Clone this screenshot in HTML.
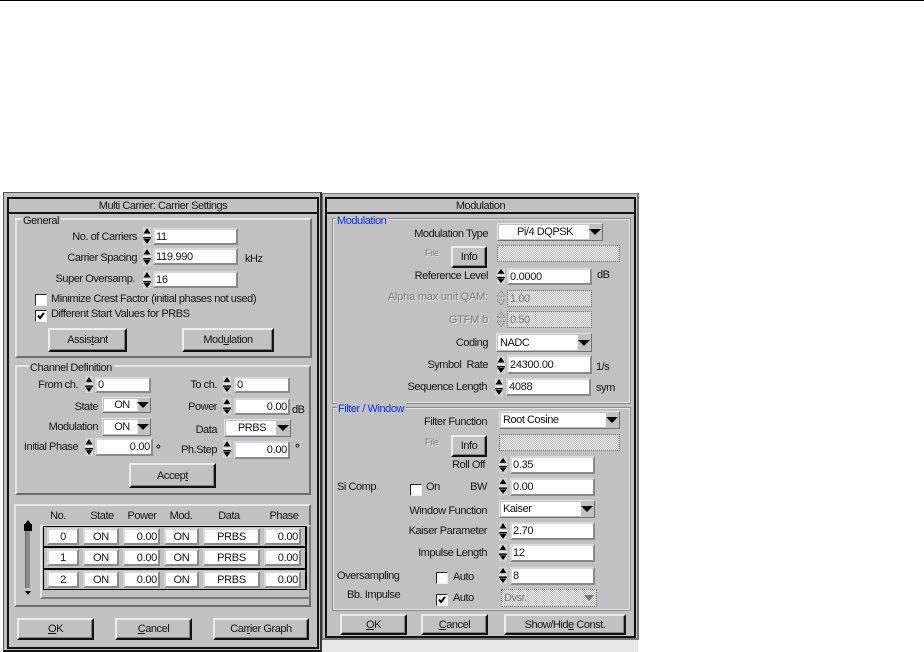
<!DOCTYPE html>
<html><head><meta charset="utf-8"><style>
html,body{margin:0;padding:0;background:#fff}
#p{position:relative;width:924px;height:652px;overflow:hidden;background:#fff;font:11px/14px "Liberation Sans",sans-serif;letter-spacing:-.45px;color:#151515}
#p div,#p span,#p svg{position:absolute;box-sizing:border-box}
em{font-style:normal}
.t{white-space:nowrap}
.r{left:0;text-align:right;white-space:nowrap}
.c{text-align:center;white-space:nowrap}
.blue{color:#1030f0;background:#c1c0c3;padding:0 2px 0 1px}
.lb{background:#c1c0c3;padding:0 2px 0 1px}
.dis{color:#7c7c7c;text-shadow:1px 1px 0 #e4e4e4;letter-spacing:-.2px}
.g{background:#c1c0c3;border:2px solid;border-color:#e6e6e6 #6e6e6e #6e6e6e #e6e6e6}
.g2{background:#c1c0c3;border:1px solid #e4e4e4;outline:1px solid #8a8a8a}
.e{background:#fff;border:2px solid;border-color:#d8d8d8 #8a8a8a #8a8a8a #d8d8d8;padding:0 1px;white-space:nowrap;display:flex;align-items:center;letter-spacing:-.3px}
.n{justify-content:flex-end}
.m{justify-content:center}
.h{background:repeating-conic-gradient(#bdbdbd 0 25%,#efefef 0 50%) 0 0/2px 2px;border:1px dotted #777;padding:0 2px;color:#7c7c7c;display:flex;align-items:center;white-space:nowrap}
.b{background:#c1c0c3;border:2px solid;border-color:#ececec #111 #111 #ececec;box-shadow:inset -1px -1px 0 #808080;display:flex;align-items:center;justify-content:center;white-space:nowrap}
.d{background:#c1c0c3;border:1px solid;border-color:#e4e4e4 #707070 #707070 #e4e4e4}
.d .w{left:1px;top:1px;bottom:1px;background:#fff;display:flex;align-items:center;white-space:nowrap;padding-left:2px}
.d .w.m{justify-content:center}
.d .a{top:50%;margin-top:-3px;width:0;height:0;border-top:6px solid #000;border-left:6px solid transparent;border-right:6px solid transparent;right:2px}
.k{width:12px;height:12px;background:#fff;border:1px solid;border-color:#222 #eee #eee #222}
.k svg{left:0;top:0}
.deg{font-weight:bold;font-size:12px}
</style></head><body><div id="p">
<svg width="0" height="0" style="left:0;top:0"><defs>
<symbol id="sp" viewBox="0 0 8 18" preserveAspectRatio="none"><rect width="8" height="18" fill="#d2d2d2"/><polygon points="4,1 7.5,6.5 .5,6.5" fill="#000"/><rect x="0" y="8" width="8" height="1" fill="#f0f0f0"/><rect x="0" y="10" width="8" height="1.5" fill="#000"/><polygon points=".5,12 7.5,12 4,17" fill="#000"/></symbol>
<symbol id="sd" viewBox="0 0 8 18" preserveAspectRatio="none"><polygon points="4,1 8,7 0,7" fill="none" stroke="#777" stroke-dasharray="1 1"/><polygon points="0,11 8,11 4,17" fill="none" stroke="#777" stroke-dasharray="1 1"/></symbol>
</defs></svg>
<div style="left:0;top:0;width:924px;height:1px;background:#000"></div>

<!-- backing -->
<div style="left:321px;top:640px;width:317px;height:12px;background:#e8e4e8"></div>

<!-- LEFT DIALOG -->
<div style="left:3px;top:192px;width:319px;height:460px;background:#c1c0c3;border:1px solid #555;border-bottom:2px solid #111;border-right:2px solid #333"></div>
<div style="left:7px;top:197px;width:312px;height:452px;border:2px solid #111;background:#c1c0c3"></div>
<div style="left:8px;top:212px;width:310px;height:2px;background:#111"></div>
<div class="c" style="left:9px;width:308px;top:199px">Multi Carrier: Carrier Settings</div>

<div class="g" style="left:15px;top:218px;width:297px;height:140px"></div>
<div class="t lb" style="left:22px;top:214px">General</div>
<div class="r" style="width:137px;top:230px">No. of Carriers</div>
<div class="r" style="width:137px;top:251px">Carrier Spacing</div>
<div class="r" style="width:135px;top:272px">Super Oversamp.</div>
<svg style="left:143px;top:227px" width="8" height="18"><use href="#sp"/></svg>
<svg style="left:143px;top:248px" width="8" height="18"><use href="#sp"/></svg>
<svg style="left:143px;top:271px" width="8" height="18"><use href="#sp"/></svg>
<div class="e" style="left:153px;top:228px;width:85px;height:17px">11</div>
<div class="e" style="left:153px;top:248px;width:85px;height:17px">119.990</div>
<div class="e" style="left:153px;top:271px;width:85px;height:17px">16</div>
<div class="t" style="left:245px;top:252px">kHz</div>
<div class="k" style="left:35px;top:294px"></div>
<div class="t" style="left:51px;top:292px">Minimize Crest Factor (initial phases not used)</div>
<div class="k" style="left:35px;top:310px"><svg width="10" height="10"><path d="M2 4.5L4 7L8 2" fill="none" stroke="#000" stroke-width="2"/></svg></div>
<div class="t" style="left:51px;top:307px">Different Start Values for PRBS</div>
<div class="b" style="left:48px;top:328px;width:79px;height:24px"><em>Assis<u>t</u>ant</em></div>
<div class="b" style="left:182px;top:328px;width:92px;height:24px"><em>Mod<u>u</u>lation</em></div>

<div class="g" style="left:15px;top:365px;width:296px;height:130px"></div>
<div class="t lb" style="left:29px;top:361px">Channel Definition</div>
<div class="r" style="width:78px;top:378px">From ch.</div>
<div class="r" style="width:217px;top:378px">To ch.</div>
<svg style="left:85px;top:376px" width="8" height="17"><use href="#sp"/></svg>
<svg style="left:223px;top:376px" width="8" height="17"><use href="#sp"/></svg>
<div class="e" style="left:95px;top:377px;width:56px;height:16px">0</div>
<div class="e" style="left:234px;top:377px;width:56px;height:16px">0</div>
<div class="r" style="width:98px;top:400px">State</div>
<div class="d" style="left:102px;top:397px;width:49px;height:16px"><div class="w m" style="width:34px">ON</div><div class="a" style="right:1px"></div></div>
<div class="r" style="width:217px;top:400px">Power</div>
<svg style="left:223px;top:398px" width="8" height="17"><use href="#sp"/></svg>
<div class="e n" style="left:234px;top:398px;width:56px;height:17px">0.00</div>
<div class="t" style="left:292px;top:403px">dB</div>
<div class="r" style="width:98px;top:420px">Modulation</div>
<div class="d" style="left:102px;top:418px;width:49px;height:18px"><div class="w m" style="width:34px">ON</div><div class="a" style="right:1px"></div></div>
<div class="r" style="width:217px;top:423px">Data</div>
<div class="d" style="left:224px;top:419px;width:67px;height:18px"><div class="w m" style="width:50px">PRBS</div><div class="a" style="right:1px"></div></div>
<div class="r" style="width:78px;top:440px">Initial Phase</div>
<svg style="left:85px;top:438px" width="8" height="18"><use href="#sp"/></svg>
<div class="e n" style="left:95px;top:438px;width:58px;height:18px">0.00</div>
<div class="t deg" style="left:156px;top:442px">°</div>
<div class="r" style="width:217px;top:443px">Ph.Step</div>
<svg style="left:223px;top:440px" width="8" height="18"><use href="#sp"/></svg>
<div class="e n" style="left:234px;top:441px;width:56px;height:18px">0.00</div>
<div class="t deg" style="left:295px;top:441px">°</div>
<div class="b" style="left:129px;top:463px;width:87px;height:25px"><em>Accep<u>t</u></em></div>

<div class="g" style="left:14px;top:504px;width:297px;height:103px"></div>
<div class="c" style="left:38px;width:40px;top:509px">No.</div>
<div class="c" style="left:82px;width:40px;top:509px">State</div>
<div class="c" style="left:122px;width:40px;top:509px">Power</div>
<div class="c" style="left:161px;width:40px;top:509px">Mod.</div>
<div class="c" style="left:209px;width:40px;top:509px">Data</div>
<div class="c" style="left:264px;width:40px;top:509px">Phase</div>

<div style="left:25px;top:525px;width:5px;height:63px;background:#8a8a8a;border-left:1px solid #666"></div>
<div style="left:24px;top:524px;width:8px;height:7px;background:#000"></div>
<svg style="left:25px;top:520px" width="6" height="4"><polygon points="3,0 6,4 0,4" fill="#000"/></svg>
<svg style="left:25px;top:591px" width="6" height="4"><polygon points="0,0 6,0 3,4" fill="#000"/></svg>

<div style="left:40px;top:525px;width:271px;height:74px;border:2px solid;border-color:#e4e4e4 #7a7a7a #7a7a7a #e4e4e4;background:#c1c0c3"></div>
<div style="left:43px;top:526px;width:264px;height:64px;border:1px solid #000;border-right:2px solid #000;background:#c1c0c3"></div>
<div style="left:44px;top:546px;width:262px;height:2px;background:#000"></div>
<div style="left:44px;top:568px;width:262px;height:2px;background:#000"></div>

<div class="e m" style="left:47px;top:528px;width:32px;height:17px">0</div>
<div class="e m" style="left:83px;top:528px;width:36px;height:17px">ON</div>
<div class="e n" style="left:123px;top:528px;width:37px;height:17px">0.00</div>
<div class="e m" style="left:164px;top:528px;width:35px;height:17px">ON</div>
<div class="e m" style="left:203px;top:528px;width:57px;height:17px">PRBS</div>
<div class="e n" style="left:264px;top:528px;width:37px;height:17px">0.00</div>

<div class="e m" style="left:47px;top:549px;width:32px;height:17px">1</div>
<div class="e m" style="left:83px;top:549px;width:36px;height:17px">ON</div>
<div class="e n" style="left:123px;top:549px;width:37px;height:17px">0.00</div>
<div class="e m" style="left:164px;top:549px;width:35px;height:17px">ON</div>
<div class="e m" style="left:203px;top:549px;width:57px;height:17px">PRBS</div>
<div class="e n" style="left:264px;top:549px;width:37px;height:17px">0.00</div>

<div class="e m" style="left:47px;top:571px;width:32px;height:17px">2</div>
<div class="e m" style="left:83px;top:571px;width:36px;height:17px">ON</div>
<div class="e n" style="left:123px;top:571px;width:37px;height:17px">0.00</div>
<div class="e m" style="left:164px;top:571px;width:35px;height:17px">ON</div>
<div class="e m" style="left:203px;top:571px;width:57px;height:17px">PRBS</div>
<div class="e n" style="left:264px;top:571px;width:37px;height:17px">0.00</div>

<div class="b" style="left:17px;top:618px;width:77px;height:22px"><em><u>O</u>K</em></div>
<div class="b" style="left:115px;top:618px;width:77px;height:22px"><em><u>C</u>ancel</em></div>
<div class="b" style="left:213px;top:618px;width:96px;height:22px"><em>Car<u>r</u>ier Graph</em></div>

<!-- RIGHT DIALOG -->
<div style="left:322px;top:193px;width:317px;height:447px;background:#c1c0c3;border:1px solid #777;border-right:2px solid #777;border-bottom:2px solid #777"></div>
<div style="left:325px;top:197px;width:311px;height:441px;border:2px solid #111;background:#c1c0c3"></div>
<div style="left:326px;top:212px;width:309px;height:2px;background:#111"></div>
<div class="c" style="left:327px;width:307px;top:199px">Modulation</div>

<div class="g2" style="left:333px;top:219px;width:297px;height:184px"></div>
<div class="t blue" style="left:336px;top:214px">Modulation</div>
<div class="r" style="width:488px;top:227px">Modulation Type</div>
<div class="d" style="left:497px;top:223px;width:106px;height:18px"><div class="w m" style="width:90px">Pi/4 DQPSK</div><div class="a" style="right:1px"></div></div>
<div class="t dis" style="left:425px;top:246px;font-size:9px">File</div>
<div class="b" style="left:451px;top:246px;width:36px;height:22px">Info</div>
<div class="h" style="left:497px;top:245px;width:123px;height:17px"></div>
<div class="r" style="width:488px;top:269px">Reference Level</div>
<svg style="left:497px;top:268px" width="8" height="16"><use href="#sp"/></svg>
<div class="e" style="left:507px;top:268px;width:85px;height:17px">0.0000</div>
<div class="t" style="left:597px;top:268px">dB</div>
<div class="r dis" style="width:488px;top:290px">Alpha max unit QAM:</div>
<svg style="left:497px;top:290px" width="8" height="16"><use href="#sd"/></svg>
<div class="h" style="left:507px;top:290px;width:85px;height:17px">1.00</div>
<div class="r dis" style="width:488px;top:313px">GTFM b</div>
<svg style="left:497px;top:311px" width="8" height="17"><use href="#sd"/></svg>
<div class="h" style="left:507px;top:311px;width:85px;height:17px">0.50</div>
<div class="r" style="width:488px;top:336px">Coding</div>
<div class="d" style="left:496px;top:333px;width:96px;height:19px"><div class="w" style="width:80px">NADC</div><div class="a" style="right:1px"></div></div>
<div class="r" style="width:488px;top:358px">Symbol&nbsp; Rate</div>
<svg style="left:497px;top:356px" width="8" height="18"><use href="#sp"/></svg>
<div class="e" style="left:507px;top:355px;width:85px;height:19px">24300.00</div>
<div class="t" style="left:596px;top:360px">1/s</div>
<div class="r" style="width:487px;top:380px">Sequence Length</div>
<svg style="left:495px;top:378px" width="8" height="18"><use href="#sp"/></svg>
<div class="e" style="left:506px;top:378px;width:85px;height:18px">4088</div>
<div class="t" style="left:596px;top:381px">sym</div>

<div class="g2" style="left:333px;top:408px;width:297px;height:202px"></div>
<div class="t blue" style="left:337px;top:402px">Filter / Window</div>
<div class="r" style="width:487px;top:415px">Filter Function</div>
<div class="d" style="left:499px;top:411px;width:121px;height:18px"><div class="w" style="width:105px">Root Cosine</div><div class="a" style="right:1px"></div></div>
<div class="t dis" style="left:425px;top:435px;font-size:9px">File</div>
<div class="b" style="left:451px;top:435px;width:36px;height:22px">Info</div>
<div class="h" style="left:499px;top:434px;width:121px;height:17px"></div>
<div class="r" style="width:485px;top:458px">Roll Off</div>
<svg style="left:499px;top:457px" width="8" height="16"><use href="#sp"/></svg>
<div class="e" style="left:510px;top:456px;width:85px;height:18px">0.35</div>
<div class="t" style="left:337px;top:480px">Si Comp.</div>
<div class="k" style="left:410px;top:484px"></div>
<div class="t" style="left:426px;top:480px">On</div>
<div class="r" style="width:487px;top:480px">BW</div>
<svg style="left:499px;top:478px" width="8" height="17"><use href="#sp"/></svg>
<div class="e" style="left:510px;top:478px;width:85px;height:18px">0.00</div>
<div class="r" style="width:487px;top:504px">Window Function</div>
<div class="d" style="left:499px;top:500px;width:96px;height:18px"><div class="w" style="width:80px">Kaiser</div><div class="a" style="right:1px"></div></div>
<div class="r" style="width:487px;top:524px">Kaiser Parameter</div>
<svg style="left:499px;top:522px" width="8" height="18"><use href="#sp"/></svg>
<div class="e" style="left:510px;top:522px;width:85px;height:18px">2.70</div>
<div class="r" style="width:487px;top:546px">Impulse Length</div>
<svg style="left:499px;top:544px" width="8" height="17"><use href="#sp"/></svg>
<div class="e" style="left:510px;top:544px;width:85px;height:18px">12</div>
<div class="t" style="left:337px;top:569px">Oversampling</div>
<div class="k" style="left:436px;top:572px"></div>
<div class="t" style="left:453px;top:570px">Auto</div>
<svg style="left:499px;top:567px" width="8" height="17"><use href="#sp"/></svg>
<div class="e" style="left:510px;top:567px;width:85px;height:18px">8</div>
<div class="t" style="left:347px;top:588px">Bb. Impulse</div>
<div class="k" style="left:436px;top:594px"><svg width="10" height="10"><path d="M2 4.5L4 7L8 2" fill="none" stroke="#000" stroke-width="2"/></svg></div>
<div class="t" style="left:453px;top:591px">Auto</div>
<div class="h" style="left:501px;top:589px;width:96px;height:18px">Dvsr.</div>
<svg style="left:583px;top:594px" width="12" height="8"><path d="M1 1h10l-5 6z" fill="#777"/></svg>

<div class="b" style="left:340px;top:614px;width:67px;height:21px"><em><u>O</u>K</em></div>
<div class="b" style="left:421px;top:614px;width:67px;height:21px"><em><u>C</u>ancel</em></div>
<div class="b" style="left:504px;top:614px;width:122px;height:21px"><em>Show/Hid<u>e</u> Const.</em></div>
</div></body></html>
